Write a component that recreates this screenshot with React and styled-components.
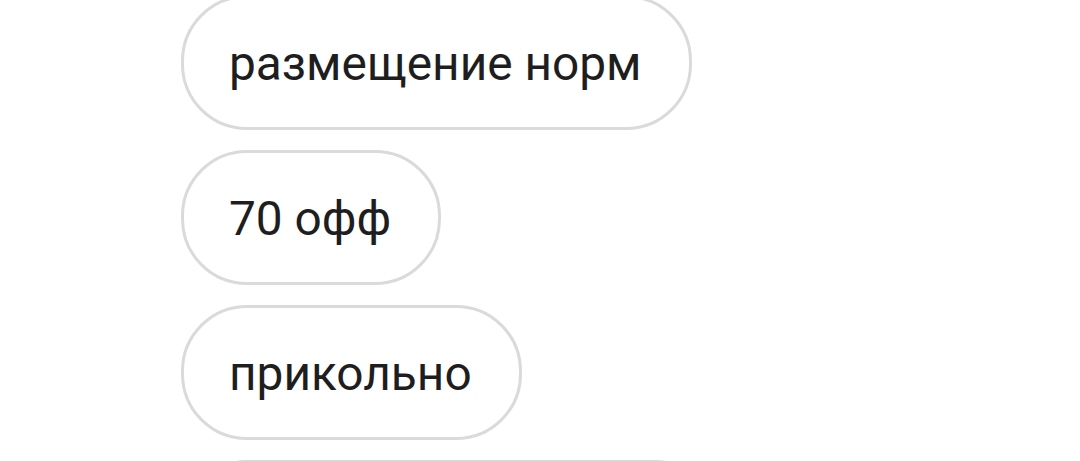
import React from "react";
import styled, { createGlobalStyle } from "styled-components";

const GlobalStyle = createGlobalStyle`
  html, body {
    margin: 0;
    padding: 0;
    background: #ffffff;
    overflow: hidden;
  }
  body {
    font-family: Roboto, "Noto Sans", "Liberation Sans", sans-serif;
  }
`;

const messages = ["размещение норм", "70 офф", "прикольно"];

const App = () => {
  return (
    <>
      <GlobalStyle />
      <Thread>
        {messages.map((text, idx) => (
          <Bubble key={idx}>{text}</Bubble>
        ))}
        <Bubble $width={540}>&nbsp;</Bubble>
      </Thread>
    </>
  );
};
export default App;

const Thread = styled.div`
  display: flex;
  flex-direction: column;
  align-items: flex-start;
  gap: 20px;
  margin-top: -5px;
  padding-left: 181px;
  height: 466px;
  overflow: hidden;
`;

const Bubble = styled.div`
  box-sizing: border-box;
  flex-shrink: 0;
  min-width: ${(p) => (p.$width ? `${p.$width}px` : "auto")};
  padding: 38px 47px 35px 45px;
  border: 3px solid #dadada;
  border-radius: 66px;
  background: #ffffff;
  color: #1e1e1e;
  font-size: 47.8px;
  line-height: 56px;
  white-space: nowrap;
`;
